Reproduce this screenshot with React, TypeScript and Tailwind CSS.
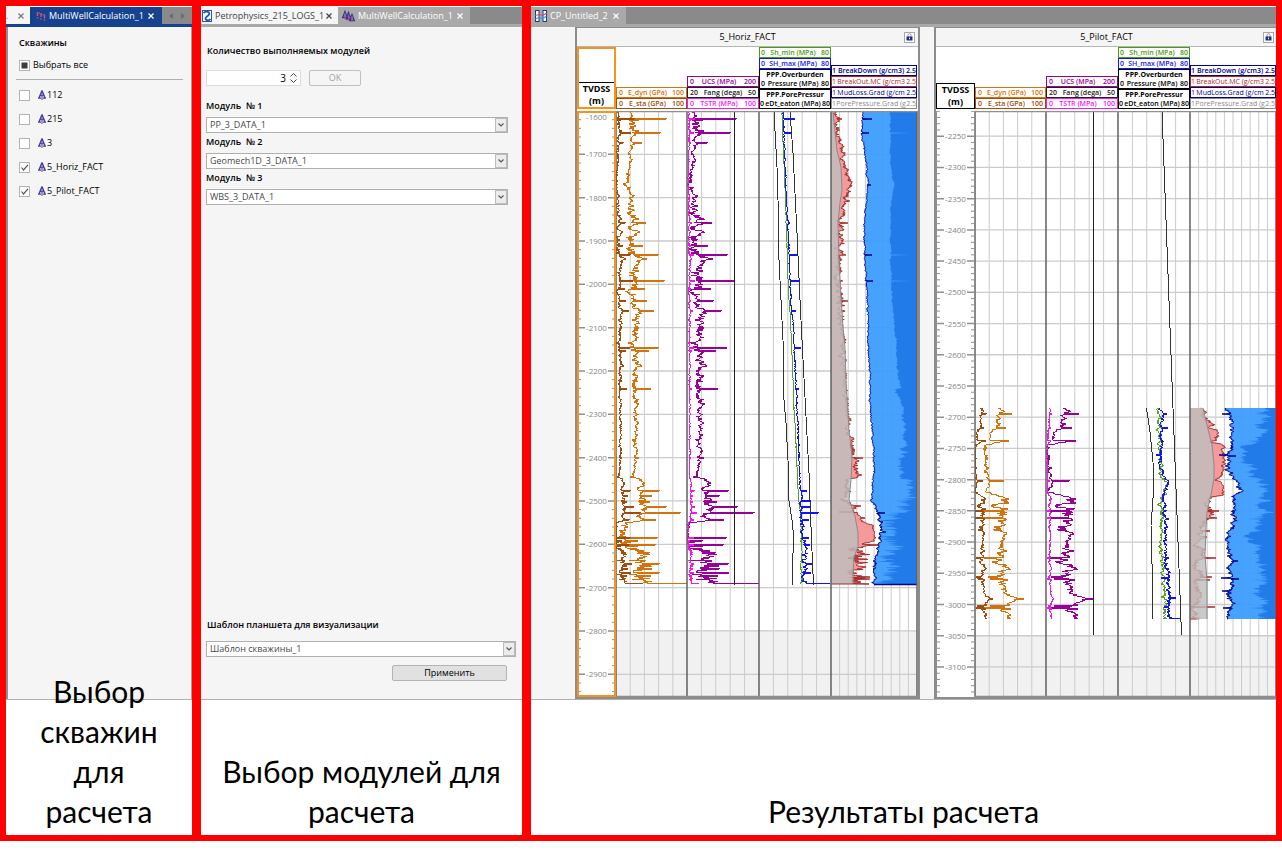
import { useState } from 'react';
import type { ReactNode } from 'react';

type Point = [number, number];

type CurveSpec = {
  base: Point[];
  noise: Point[];
  spikes?: Point[];
  burst?: { from: number; to: number; reach: number };
  seed: number;
};

type WellCurves = {
  top: number;
  bottom: number;
  modulus: CurveSpec;
  pore: Point[];
  overburden: Point[];
  shMin: CurveSpec;
  shMax: CurveSpec;
  breakOut: CurveSpec;
  poreGrad: Point[];
  mudLoss: CurveSpec;
  breakDown: CurveSpec;
  fangEnd: number;
};

type Scale = {
  firstTick: number;
  firstDepth: number;
  depthStep: number;
  tickGap: number;
  shadeFrom: number;
};

const PLOT_W = 341;
const PLOT_H = 586;
const TRACKS = [39, 110, 182, 254, 340];

function createRandom(seed: number) {
  let s = seed;
  return () => {
    s = (s * 16807) % 2147483647;
    return s / 2147483647;
  };
}

// Points are [y, x], sorted by y
function lerp(points: Point[], y: number) {
  if (y <= points[0][0]) return points[0][1];
  for (let i = 1; i < points.length; i++) {
    const [y0, x0] = points[i - 1];
    const [y1, x1] = points[i];
    if (y <= y1) return x0 + ((x1 - x0) * (y - y0)) / (y1 - y0);
  }
  return points[points.length - 1][1];
}

function sample(spec: CurveSpec, top: number, bottom: number): Point[] {
  const rnd = createRandom(spec.seed);
  const out: Point[] = [];
  let drift = 0;
  for (let y = top; y <= bottom; y += 0.5) {
    const amp = lerp(spec.noise, y);
    drift = drift * 0.75 + (rnd() - 0.5) * 1.2;
    let x = lerp(spec.base, y) + (drift + (rnd() - 0.5) * 0.8) * amp;
    const roll = rnd();
    if (spec.burst && y > spec.burst.from && y < spec.burst.to && roll < 0.4) {
      x += rnd() * spec.burst.reach;
    }
    const spike = spec.spikes?.find(([sy]) => sy === y);
    if (spike) x = spike[1];
    out.push([y, x]);
  }
  return out;
}

const remap = (points: Point[], fn: (x: number) => number, jitter: number, seed: number): Point[] => {
  const rnd = createRandom(seed);
  return points.map(([y, x]) => [y, fn(x) + (rnd() - 0.5) * jitter]);
};

const toLine = (points: Point[]) =>
  points.map(([y, x], i) => `${i ? 'L' : 'M'}${x.toFixed(1)} ${y.toFixed(1)}`).join('');

const toArea = (points: Point[], edge: number) =>
  `M${edge} ${points[0][0]}${toLine(points).replace('M', 'L')}L${edge} ${points[points.length - 1][0]}Z`;

const horizCurves: WellCurves = {
  top: 1,
  bottom: 473,
  fangEnd: 474,
  modulus: {
    seed: 4177,
    base: [
      [1, 54], [20, 56], [36, 54], [56, 53], [68, 50], [73, 48], [84, 53], [110, 58], [130, 56], [155, 60],
      [182, 56], [205, 60], [237, 56], [255, 61], [275, 60], [300, 58], [330, 59], [355, 58], [366, 55],
      [368, 64], [409, 65], [412, 49], [425, 46], [433, 50], [445, 60], [470, 63], [473, 64],
    ],
    noise: [[1, 2], [18, 5], [22, 5], [26, 2], [60, 2], [80, 3], [110, 5], [150, 6], [190, 5], [230, 4], [280, 4], [300, 3], [340, 2], [366, 2], [375, 4], [410, 5], [425, 6], [473, 7]],
    burst: { from: 427, to: 472, reach: 14 },
    spikes: [
      [8, 90], [9, 62], [20, 62], [22, 84], [32, 65], [112, 69], [135, 66], [144, 82], [170, 88], [178, 68],
      [190, 70], [200, 77], [237, 82], [240, 72], [278, 74], [347, 62], [380, 83], [385, 75], [391, 73],
      [396, 90], [402, 104], [409, 79], [427, 81], [434, 79], [453, 83], [458, 75], [462, 83], [473, 110],
    ],
  },
  pore: [[1, 197], [56, 200], [89, 201], [149, 202], [189, 204], [229, 206], [289, 207], [312, 209], [349, 211], [390, 212], [409, 215], [429, 217], [449, 215.5], [474, 215.5]],
  overburden: [[1, 213], [42, 216], [122, 220], [189, 223], [229, 225], [362, 232], [429, 234.5], [474, 236.5]],
  shMin: {
    seed: 91,
    base: [[1, 205], [42, 206.5], [76, 208], [116, 209.5], [169, 211], [205, 213], [229, 214.5], [296, 217], [342, 219.5], [389, 221.5], [402, 223.5], [425, 224.5], [473, 224.5]],
    noise: [[1, 0.2], [380, 0.3], [473, 1]],
  },
  shMax: {
    seed: 733,
    base: [[1, 206.5], [49, 208], [76, 209], [116, 211], [146, 212], [189, 214], [229, 217], [292, 219.5], [342, 222], [389, 224], [409, 225], [429, 227], [473, 228]],
    noise: [[1, 0.5], [360, 0.8], [400, 2], [473, 3]],
    spikes: [[8, 218], [22, 215], [112, 213], [144, 220], [170, 223], [200, 219], [237, 224], [278, 222], [380, 230], [390, 234], [396, 233], [402, 242], [409, 232], [427, 232], [434, 233], [453, 235], [462, 234], [473, 253]],
  },
  poreGrad: [[1, 256], [39, 260], [56, 264], [79, 265], [92, 263], [112, 261], [149, 262], [186, 264], [216, 266], [237, 268], [269, 269], [319, 272], [345, 275], [369, 274], [389, 272], [405, 278], [422, 281], [436, 281], [446, 277], [462, 276], [473, 276]],
  breakOut: {
    seed: 58,
    base: [[1, 259], [22, 261], [49, 267], [66, 271], [73, 275], [82, 270], [99, 267], [109, 264], [132, 265], [155, 262], [186, 263], [216, 266], [237, 266], [269, 267], [289, 269], [319, 272], [342, 276], [350, 278], [365, 280], [368, 273], [389, 272], [402, 279], [411, 287], [415, 297], [430, 297], [433, 284], [442, 277], [473, 277]],
    noise: [[1, 3], [60, 3], [80, 3], [100, 3], [150, 5], [229, 3], [290, 3], [360, 4], [395, 5], [411, 2], [430, 2], [435, 8], [473, 8]],
    burst: { from: 432, to: 472, reach: 14 },
    spikes: [[8, 265], [112, 271], [144, 269], [172, 264], [190, 271], [347, 286], [395, 284], [401, 262], [407, 288], [434, 303], [466, 293], [473, 292]],
  },
  mudLoss: {
    seed: 3121,
    base: [[1, 286], [22, 285], [52, 289], [74, 291], [109, 287.5], [142, 287.5], [176, 290], [206, 291], [229, 291.5], [289, 293], [322, 295.5], [362, 297], [386, 294.5], [392, 296], [402, 300], [416, 303], [429, 303], [446, 299], [462, 297], [473, 297]],
    noise: [[1, 0.8], [380, 1], [400, 2], [473, 2]],
    spikes: [[8, 295], [22, 292], [74, 294], [144, 295], [170, 296], [402, 308], [411, 306], [421, 309]],
  },
  breakDown: {
    seed: 842,
    base: [[1, 313.5], [56, 313.5], [75, 317], [89, 314], [149, 313.5], [189, 315], [229, 319], [262, 321], [277, 323], [279, 318], [296, 326], [329, 328], [349, 326], [366, 322], [369, 333], [396, 332], [408, 318], [429, 318], [437, 324], [449, 316], [462, 314], [473, 312]],
    noise: [[1, 0.8], [229, 1], [300, 2], [350, 4], [366, 7], [408, 6], [420, 3], [430, 9], [473, 9]],
    burst: { from: 384, to: 472, reach: -14 },
    spikes: [[22, 336], [144, 335], [170, 336], [473, 300]],
  },
};

const pilotCurves: WellCurves = {
  top: 297,
  bottom: 508,
  fangEnd: 524,
  modulus: {
    seed: 2203,
    base: [[297, 64], [299, 67], [304, 62], [311, 61], [317, 62], [321, 56], [329, 55], [331, 64], [334, 49], [351, 51], [367, 52], [381, 51], [386, 66], [397, 63], [404, 67], [417, 66], [431, 67], [444, 65], [457, 68], [464, 66], [477, 68], [484, 72], [487, 84], [491, 74], [498, 68], [508, 74]],
    noise: [[297, 4], [318, 4], [325, 1], [332, 3], [345, 3], [370, 2], [380, 2], [390, 7], [420, 6], [430, 3], [450, 6], [480, 4], [508, 4]],
    spikes: [[303, 76], [317, 70], [330, 73], [370, 68], [394, 56], [400, 44], [401, 64], [407, 46], [408, 70], [447, 48], [451, 56], [466, 52], [468, 54], [469, 72], [488, 88], [495, 54], [497, 47], [498, 75]],
  },
  pore: [[297, 210.5], [321, 214], [351, 217], [381, 217.5], [414, 215], [471, 216.5], [508, 217]],
  overburden: [[1, 226], [284, 236.5], [524, 245.5]],
  shMin: {
    seed: 640,
    base: [[297, 222.5], [344, 224], [364, 225], [372, 230], [384, 229], [387, 225.5], [411, 226.5], [431, 224], [464, 227.5], [508, 229]],
    noise: [[297, 2], [508, 2.5]],
  },
  shMax: {
    seed: 1789,
    base: [[297, 225], [331, 226], [361, 225], [372, 231], [380, 229], [387, 228], [411, 230], [431, 229], [464, 231], [484, 233], [508, 233.5]],
    noise: [[297, 2], [508, 2.5]],
    spikes: [[303, 231], [317, 232], [344, 220], [408, 233], [447, 233], [467, 225], [469, 234], [487, 240], [496, 228], [508, 244]],
  },
  poreGrad: [[297, 267], [314, 271], [334, 276], [354, 278], [367, 278], [384, 275], [401, 271], [417, 270], [444, 269], [471, 271], [508, 271]],
  breakOut: {
    seed: 977,
    base: [[297, 267], [304, 268], [314, 276], [317, 272], [319, 280], [329, 281], [331, 274], [333, 285], [344, 289], [361, 288], [369, 281], [373, 285], [384, 287], [386, 275], [394, 272], [407, 271], [417, 268], [431, 263], [444, 266], [454, 261], [464, 268], [471, 261], [484, 266], [494, 258], [508, 260]],
    noise: [[297, 3], [380, 2], [400, 5], [508, 4]],
    spikes: [[400, 283], [407, 281], [420, 274], [447, 280], [466, 276], [469, 274], [496, 279]],
  },
  mudLoss: {
    seed: 1512,
    base: [[297, 291], [311, 296], [317, 298], [327, 296], [337, 293], [361, 291], [369, 299], [377, 305], [386, 299], [401, 296], [414, 298], [424, 294], [429, 290], [437, 294], [451, 296], [467, 295], [484, 294], [508, 293]],
    noise: [[297, 3], [508, 3.5]],
    spikes: [[303, 286], [344, 283], [345, 300], [450, 302], [467, 285], [468, 303], [480, 286], [497, 287]],
  },
  breakDown: {
    seed: 311,
    base: [[297, 331], [314, 324], [324, 329], [337, 307], [347, 304], [364, 314], [377, 327], [401, 326], [414, 322], [427, 312], [437, 321], [451, 326], [464, 331], [481, 321], [494, 327], [508, 319]],
    noise: [[297, 8], [340, 6], [400, 7], [508, 8]],
    spikes: [[303, 318], [330, 312], [408, 311], [469, 316], [497, 314]],
  },
};

const wells = [
  {
    name: '5_Horiz_FACT',
    active: true,
    curves: horizCurves,
    scale: { firstTick: 0, firstDepth: 1600, depthStep: 100, tickGap: 43.33, shadeFrom: 520 },
  },
  {
    name: '5_Pilot_FACT',
    active: false,
    curves: pilotCurves,
    scale: { firstTick: -6, firstDepth: 2200, depthStep: 50, tickGap: 31.22, shadeFrom: 525 },
  },
];

function DepthTrack({ scale, active }: { scale: Scale; active: boolean }) {
  const ticks = Array.from({ length: 20 }, (_, i) => scale.firstTick + i * scale.tickGap);
  return (
    <g>
      <rect x="0" y="0" width="39" height={PLOT_H} fill="#fff" />
      {ticks.map((y, i) => (
        <g key={i} stroke="#8f8f8f" strokeWidth="1">
          {y > 4 && <path d={`M1 ${y}H8M31 ${y}H38`} strokeWidth="1.5" />}
          {[1, 2, 3, 4].map((n) => {
            const ty = y + (n * scale.tickGap) / 5;
            return <path key={n} d={`M1 ${ty}H4M35 ${ty}H38`} />;
          })}
          {y > -1 && y < PLOT_H - 4 && (
            <text
              x="19.5"
              y={Math.max(y, 6) + 3}
              textAnchor="middle"
              stroke="none"
              fill="#858585"
              className="text-[8px]"
            >
              {`-${scale.firstDepth + i * scale.depthStep}`}
            </text>
          )}
        </g>
      ))}
      {active ? (
        <rect x="1" y="1" width="37" height={PLOT_H - 2} fill="none" stroke="#f39422" strokeWidth="2" />
      ) : (
        <path d={`M38.5 0V${PLOT_H}M0.5 0V${PLOT_H}`} stroke="#8f8f8f" strokeWidth="1" />
      )}
    </g>
  );
}

function PlotGrid({ scale }: { scale: Scale }) {
  const vertical: number[] = [];
  for (let t = 0; t < 4; t++) {
    const cells = t === 3 ? 10 : 5;
    const step = (TRACKS[t + 1] - TRACKS[t]) / cells;
    for (let i = 1; i < cells; i++) vertical.push(TRACKS[t] + step * i);
  }
  return (
    <g fill="none" stroke="#cbcbcb">
      <rect x="39" y={scale.shadeFrom} width="301" height={PLOT_H - scale.shadeFrom} fill="#f1f1f1" stroke="none" />
      {Array.from({ length: 19 }, (_, i) => scale.firstTick + i * scale.tickGap)
        .filter((y) => y > 0 && y < PLOT_H)
        .map((y) => (
          <path key={y} d={`M39 ${y}H340`} strokeWidth="1.3" />
        ))}
      {vertical.map((x) => (
        <path key={x} d={`M${x} 0V${PLOT_H}`} strokeWidth="1" />
      ))}
    </g>
  );
}

function WellPlot({ name, curves, scale, active }: { name: string; curves: WellCurves; scale: Scale; active: boolean }) {
  const { top, bottom } = curves;
  const eDyn = sample(curves.modulus, top, bottom);
  const eSta = remap(eDyn, (x) => Math.max(39.5, 41.5 + (x - 54.7) * 0.45), 1.5, 17);
  const ucs = remap(eDyn, (x) => Math.min(182, Math.max(111, 118 + (x - 54.7) * 1.2)), 1, 29);
  const tstr = remap(eDyn, (x) => Math.max(111, 112 + (x - 54.7) * 0.18), 1, 43);
  const breakOut = sample(curves.breakOut, top, bottom).map(([y, x]): Point => [y, Math.max(x, 255)]);
  const mudLoss = sample(curves.mudLoss, top, bottom);
  const breakDown = sample(curves.breakDown, top, bottom).map(([y, x]): Point => [y, Math.min(x, 339)]);

  return (
    <svg width={PLOT_W} height={PLOT_H} viewBox={`0 0 ${PLOT_W} ${PLOT_H}`} className="block" role="img" aria-label={name}>
      <rect width={PLOT_W} height={PLOT_H} fill="#fff" />
      <PlotGrid scale={scale} />

      <g fill="none" strokeWidth="1" strokeLinejoin="bevel" shapeRendering="crispEdges">
        <path d={toLine(eDyn)} stroke="#d4720c" />
        <path d={toLine(eSta)} stroke="#a14b0c" />
        <path d={toLine(ucs)} stroke="#990099" />
        <path d={toLine(tstr)} stroke="#f514f5" />
        <path d={`M157.5 0V${curves.fangEnd}`} stroke="#222" />
        <path d={toLine(curves.pore)} stroke="#333" />
        <path d={toLine(curves.overburden)} stroke="#333" />
        <path d={toLine(sample(curves.shMin, top, bottom))} stroke="#58a618" />
        <path d={toLine(sample(curves.shMax, top, bottom))} stroke="#1414f0" />
      </g>

      {/* Safe mud window */}
      <path d={toArea(breakOut, 254)} fill="#f49a9a" />
      <path d={toLine(breakOut)} fill="none" stroke="#a82a2a" strokeWidth="1" strokeLinejoin="bevel" />
      <path d={toArea(curves.poreGrad, 254)} fill="#bebebe" fillOpacity="0.82" />
      <path d={toLine(curves.poreGrad)} fill="none" stroke="#8a8a8a" strokeWidth="1" />
      <path d={toArea(mudLoss, 340)} fill="#3c9cfd" fillOpacity="0.94" />
      <path d={toArea(breakDown, 340)} fill="#217be9" />
      <path d={toLine(mudLoss)} fill="none" stroke="#00008f" strokeWidth="1" strokeLinejoin="bevel" />
      {active && <path d="M297 473.5H340" stroke="#00008f" strokeWidth="1.5" />}
      <path d={`M254 ${bottom}H${active ? 292 : 260}`} stroke="#a82a2a" />

      <g stroke="#5f5f5f" strokeWidth="1.5">
        {TRACKS.map((x) => (
          <path key={x} d={`M${x} 0V${PLOT_H}`} />
        ))}
        <path d={`M0 .5H${PLOT_W}M39 ${PLOT_H - 0.5}H${PLOT_W}`} stroke="#8f8f8f" />
      </g>
      <DepthTrack scale={scale} active={active} />
    </svg>
  );
}

type LegendProps = { className: string; min: string; name: string; max: string; first?: string };

function Legend({ className, min, name, max, first }: LegendProps) {
  return (
    <div className={`border text-[7px] leading-[9px] whitespace-nowrap ${className}`}>
      {first && <div className="text-center font-bold">{first}</div>}
      <div className="flex justify-between">
        <span>{min}</span>
        <span>{name}</span>
        <span>{max}</span>
      </div>
    </div>
  );
}

function LockIcon() {
  return (
    <svg width="7" height="8" viewBox="0 0 7 8" fill="none">
      <path d="M2 4V2.2a1.5 1.5 0 0 1 3 0V4" stroke="#c08a9c" />
      <rect x="0.5" y="3.5" width="6" height="4" fill="#16338c" />
      <rect x="3" y="4.7" width="1" height="1.5" fill="#fff" />
    </svg>
  );
}

function Well({ name, active, curves, scale }: (typeof wells)[number]) {
  return (
    <section className="shrink-0 border-x-2 border-t border-b-2 border-[#8c8c8c] bg-white">
      <header className="grid h-[19px] grid-cols-[14px_1fr_14px] items-center border-b border-[#b5b5b5] bg-[#f5f5f5]">
        <h2 className="col-start-2 text-center text-[9px] leading-4">{name}</h2>
        <button aria-label="Закрепить" className="flex size-[11px] items-center justify-center border border-[#a9a9a9] bg-white">
          <LockIcon />
        </button>
      </header>
      <div className="grid h-[62px] grid-cols-[39px_71px_72px_72px_86px] items-end">
        <div className={active ? 'flex h-full flex-col justify-end border-2 border-[#f39422]' : 'border border-black'}>
          <div className={`text-center text-[9px] leading-3 font-bold ${active ? 'border-t border-black' : ''}`}>
            TVDSS
            <br />
            (m)
          </div>
        </div>
        <div>
          <Legend className="border-[#d4720c] px-0.5 font-semibold text-[#d4720c]" min="0" name="E_dyn (GPa)" max="100" />
          <Legend className="border-[#a14b0c] px-0.5 font-semibold text-[#a14b0c]" min="0" name="E_sta (GPa)" max="100" />
        </div>
        <div>
          <Legend className="border-[#990099] px-0.5 font-semibold text-[#990099]" min="0" name="UCS (MPa)" max="200" />
          <Legend className="border-[#222] px-0.5 font-semibold text-[#222]" min="20" name="Fang (dega)" max="50" />
          <Legend className="border-[#f514f5] px-0.5 font-semibold text-[#f514f5]" min="0" name="TSTR (MPa)" max="100" />
        </div>
        <div>
          <Legend className="border-[#4b9a12] px-px font-semibold text-[#4b9a12]" min="0" name="Sh_min (MPa)" max="80" />
          <Legend className="border-[#1414f0] px-px font-semibold text-[#1414f0]" min="0" name="SH_max (MPa)" max="80" />
          <Legend className="border-black px-px font-semibold text-black" first="PPP.Overburden" min="0" name="Pressure (MPa)" max="80" />
          <Legend className="border-black font-semibold text-black" first="PPP.PorePressur" min="0" name="eDt_eaton (MPa)" max="80" />
        </div>
        <div>
          <Legend className="border-[#00008f] font-semibold text-[#00008f]" min="1" name="BreakDown (g/cm3)" max="2.5" />
          <Legend className="border-[#a82a2a] text-[#a82a2a]" min="1" name="BreakOut.MC (g/cm3" max="2.5" />
          <Legend className="border-[#00008f] text-[#00008f]" min="1" name="MudLoss.Grad (g/cm" max="2.5" />
          <Legend className="border-[#8a8a8a] text-[#8a8a8a]" min="1" name="PorePressure.Grad (g" max="2.5" />
        </div>
      </div>
      <div className="mt-[2px]">
        <WellPlot name={name} curves={curves} scale={scale} active={active} />
      </div>
    </section>
  );
}

function CloseIcon() {
  return (
    <svg width="6" height="6" viewBox="0 0 6 6" fill="none" stroke="currentColor" strokeWidth="1.2">
      <path d="M.5 .5l5 5M5.5 .5l-5 5" />
    </svg>
  );
}

function WellIcon() {
  return (
    <svg width="8" height="10" viewBox="0 0 8 10" fill="none">
      <path d="M4 .5L.8 8.2M4 .5l3.2 7.7M0 8.2h3M5 8.2h3M2 5.5h4" stroke="#2c47ae" strokeWidth="1.3" />
      <path d="M4 3V10" stroke="#c0407a" strokeWidth="1.2" />
    </svg>
  );
}

function MultiWellIcon({ light = false }: { light?: boolean }) {
  return light ? (
    <svg width="10" height="10" viewBox="0 0 10 10" fill="none" strokeWidth="1.4">
      <path d="M1.5 1v4M5 2v4M8.5 3.500v4" stroke="#d0557c" />
      <path d="M1.5 6v1.500M5 7.200v1.500M8.500 8.500v1.500M3.300 1.500v1.200M7 3v1.200" stroke="#c0557c" />
    </svg>
  ) : (
    <svg width="13" height="12" viewBox="0 0 13 12" fill="none">
      <path d="M.5 8l2.500-6.500L5.500 8M4 9.500l2.500-7L9 9.500M7.500 11L10 4.500l2.500 6.500M0 7.500h6M3.500 9h6M7 10.500h6" stroke="#2b3c9c" strokeWidth="1.3" />
      <path d="M3 3v6M6.500 4.500v6M10 6v5.500" stroke="#c8477c" strokeWidth="1.200" />
    </svg>
  );
}

function PetroIcon() {
  return (
    <svg width="10" height="12" viewBox="0 0 10 12">
      <rect x=".5" y=".5" width="9" height="11" fill="#fff" stroke="#2457a8" />
      <path d="M1.500 3C4 .5 8.500 2 7 4.500S2.500 7 3.500 9s4 1.500 5 0" fill="none" stroke="#1d57b5" strokeWidth="1.800" />
    </svg>
  );
}

function PlanIcon() {
  return (
    <svg width="12" height="12" viewBox="0 0 12 12" fill="none">
      <rect x=".5" y=".5" width="3.500" height="11" fill="#fff" stroke="#27387c" />
      <rect x="8" y=".5" width="3.500" height="11" fill="#fff" stroke="#27387c" />
      <path d="M.5 5.500l3.500-1 4 1 3.500-2.500" stroke="#d0507a" strokeWidth="1.200" />
      <path d="M.5 9l3.500-1.500 4 1L11.500 6" stroke="#3b9be0" strokeWidth="1.200" />
    </svg>
  );
}

function Tab({ icon, label, className }: { icon?: ReactNode; label: string; className: string }) {
  return (
    <div className={`flex shrink-0 items-center justify-between ${className}`}>
      <button className="flex items-center gap-[3px] whitespace-nowrap">
        {icon}
        {label}
      </button>
      <button aria-label="Закрыть">
        <CloseIcon />
      </button>
    </div>
  );
}

function TabBar({ accent, children }: { accent: string; children: ReactNode }) {
  return (
    <div className={`flex h-[21px] shrink-0 overflow-hidden border-t border-b-[3px] border-t-white bg-[#8a8a8a] text-[9px] leading-4 ${accent}`}>
      {children}
    </div>
  );
}

function Panel({ caption, className, children }: { caption: ReactNode; className: string; children: ReactNode }) {
  return (
    <div className={`flex min-w-0 flex-col bg-white ${className}`}>
      <div className="flex h-[694px] shrink-0 flex-col border-b border-[#b0b0b0] bg-[#f5f5f5]">{children}</div>
      <div className="flex min-h-0 flex-1 flex-col justify-end">
        <p className="px-4 pb-1 text-center font-[Lato,'Noto_Sans',sans-serif] text-[30px] leading-10">{caption}</p>
      </div>
    </div>
  );
}

function Check({ label, icon, checked, partial, onChange }: {
  label: string;
  icon?: ReactNode;
  checked?: boolean;
  partial?: boolean;
  onChange: () => void;
}) {
  return (
    <label className={`flex items-center text-[9px] leading-4 ${icon ? 'h-6' : 'h-4 gap-[3px]'}`}>
      <span className="grid size-[11px]">
        <input
          type="checkbox"
          checked={!!checked}
          onChange={onChange}
          className="size-[11px] appearance-none border border-[#b3b3b3] bg-white [grid-area:1/1]"
        />
        <svg viewBox="0 0 11 11" className="pointer-events-none size-[11px] [grid-area:1/1]" fill="none">
          {partial && <rect x="2.5" y="2.5" width="6" height="6" fill="#3d3d3d" />}
          {checked && !partial && <path d="M2.500 5.500l2 2.500L9 2.800" stroke="#555" strokeWidth="1.200" />}
        </svg>
      </span>
      {icon && <span className="mr-px ml-2">{icon}</span>}
      {label}
    </label>
  );
}

function SelectBox({ id, label, value, labelGap }: { id: string; label: string; value: string; labelGap: string }) {
  return (
    <>
      <label htmlFor={id} className={`block text-[9px] leading-4 font-semibold whitespace-pre text-black ${labelGap}`}>
        {label}
      </label>
      <div className="grid">
        <select
          id={id}
          defaultValue={value}
          className="h-4 w-full appearance-none border border-[#b0b0b0] bg-white px-[3px] text-[9px] leading-[14px] text-[#484848] [grid-area:1/1]"
        >
          <option>{value}</option>
        </select>
        <span className="pointer-events-none m-px flex h-[14px] w-3 items-center justify-center justify-self-end border border-[#bcbcbc] bg-[#ececec] [grid-area:1/1]">
          <svg width="6" height="4" viewBox="0 0 6 4" fill="none" stroke="#555" strokeWidth="1.100">
            <path d="M.5 .5L3 3 5.500 .5" />
          </svg>
        </span>
      </div>
    </>
  );
}

const modules = ['PP_3_DATA_1', 'Geomech1D_3_DATA_1', 'WBS_3_DATA_1'];

export default function App() {
  const [selected, setSelected] = useState<Record<string, boolean>>({
    '112': false,
    '215': false,
    '3': false,
    '5_Horiz_FACT': true,
    '5_Pilot_FACT': true,
  });
  const [count, setCount] = useState(3);
  const names = ['112', '215', '3', '5_Horiz_FACT', '5_Pilot_FACT'];
  const picked = names.filter((n) => selected[n]).length;

  const toggle = (n: string) => setSelected((prev) => ({ ...prev, [n]: !prev[n] }));
  const toggleAll = () => setSelected(Object.fromEntries(names.map((n) => [n, picked < names.length])));

  return (
    <div className="h-screen min-h-[740px] overflow-hidden bg-white pb-[10px] font-['Open_Sans','Noto_Sans',sans-serif] text-[#1c1c1c]">
      <main className="flex h-full gap-[9px] bg-[#ff0000] p-[6px]">
        <Panel className="w-[186px] shrink-0 text-black" caption="Выбор скважин для расчета">
          <TabBar accent="border-b-[#17428f]">
            <Tab label="." className="w-6 bg-[#f5f5f5] pr-1.5 text-[#777]" />
            <Tab
              icon={<MultiWellIcon light />}
              label="MultiWellCalculation_1"
              className="w-[132px] bg-[#17428f] pr-2 pl-1.5 text-white"
            />
            <div className="flex flex-1 items-center justify-evenly text-[#6b6b6b]">
              <button aria-label="Назад">
                <svg width="4" height="6" viewBox="0 0 4 6" fill="currentColor"><path d="M4 0v6L0 3z" /></svg>
              </button>
              <button aria-label="Вперёд">
                <svg width="4" height="6" viewBox="0 0 4 6" fill="currentColor"><path d="M0 0v6l4-3z" /></svg>
              </button>
            </div>
          </TabBar>
          <div className="flex-1 border-r border-l-2 border-r-[#a0a0a0] border-l-[#8f8f8f] px-2 pt-2">
            <div className="pl-[3px]">
              <h1 className="mb-1.5 text-[9px] leading-4 font-semibold">Скважины</h1>
              <Check label="Выбрать все" checked={picked > 0} partial={picked > 0 && picked < names.length} onChange={toggleAll} />
            </div>
            <hr className="mt-1.5 mb-[3px] border-t border-[#b0b0b0]" />
            <div className="pl-[3px]">
              {names.map((n) => (
                <Check key={n} label={n} icon={<WellIcon />} checked={selected[n]} onChange={() => toggle(n)} />
              ))}
            </div>
          </div>
        </Panel>

        <Panel className="w-[321px] shrink-0 text-black" caption="Выбор модулей для расчета">
          <TabBar accent="border-b-[#a9a9a9]">
            <Tab icon={<PetroIcon />} label="Petrophysics_215_LOGS_1" className="w-[137px] bg-[#f5f5f5] pr-1.5 pl-px text-[#444]" />
            <Tab icon={<MultiWellIcon />} label="MultiWellCalculation_1" className="w-[132px] bg-[#a9a9a9] pr-[7px] pl-1 text-white" />
          </TabBar>
          <form className="flex flex-1 flex-col px-[5px] pt-4 pb-[18px]" onSubmit={(e) => e.preventDefault()}>
            <label htmlFor="count" className="pl-px text-[9px] leading-4 font-semibold">
              Количество выполняемых модулей
            </label>
            <div className="mt-[11px] flex gap-2">
              <div className="grid">
                <input
                  id="count"
                  type="number"
                  value={count}
                  onChange={(e) => setCount(Number(e.target.value))}
                  className="h-4 w-[95px] appearance-none border border-[#dcdcdc] bg-white pr-3.5 text-right text-[10px] leading-[14px] [grid-area:1/1] [&::-webkit-inner-spin-button]:appearance-none"
                />
                <svg width="7" height="10" viewBox="0 0 7 10" fill="none" stroke="#444" className="pointer-events-none mr-1 self-center justify-self-end [grid-area:1/1]">
                  <path d="M.5 3.500l3-3 3 3M.5 6.500l3 3 3-3" />
                </svg>
              </div>
              <button disabled className="h-4 w-[52px] rounded-xs border border-[#c0c0c0] text-[9px] leading-[14px] text-[#a3a3a3]">
                OK
              </button>
            </div>
            <div className="mt-3 mr-[9px]">
              {modules.map((m, i) => (
                <div key={m} className="mb-px">
                  <SelectBox id={`module-${i}`} label={`Модуль  № ${i + 1}`} value={m} labelGap="mb-[3px]" />
                </div>
              ))}
            </div>
            <div className="mt-auto mr-px">
              <SelectBox id="template" label="Шаблон планшета для визуализации" value="Шаблон скважины_1" labelGap="mb-2 pl-px" />
              <button className="mt-2 mr-[9px] ml-auto block h-4 w-[115px] rounded-xs border border-[#b3b3b3] bg-[#e1e1e1] text-[9px] leading-[14px]">
                Применить
              </button>
            </div>
          </form>
        </Panel>

        <Panel className="flex-1 text-black" caption="Результаты расчета">
          <TabBar accent="border-b-[#a9a9a9]">
            <Tab icon={<PlanIcon />} label="CP_Untitled_2" className="w-[95px] bg-[#a9a9a9] pr-[7px] pl-1 text-white" />
          </TabBar>
          <div className="flex min-h-0 flex-1 items-start gap-[14px] overflow-hidden pl-11">
            {wells.map((well) => (
              <Well key={well.name} {...well} />
            ))}
          </div>
        </Panel>
      </main>
    </div>
  );
}
